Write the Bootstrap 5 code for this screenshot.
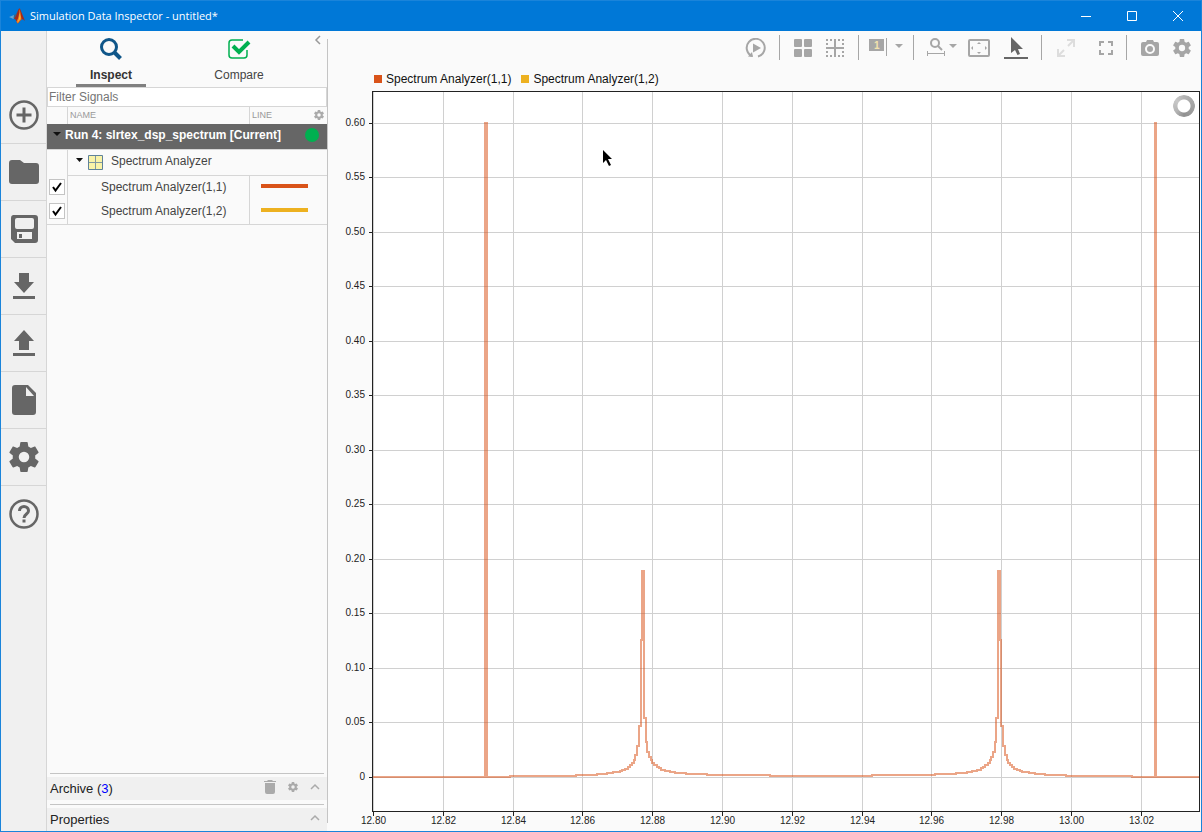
<!DOCTYPE html>
<html lang="en">
<head>
<meta charset="utf-8">
<meta name="viewport" content="width=device-width, initial-scale=1">
<title>Simulation Data Inspector - untitled*</title>
<link href="https://cdn.jsdelivr.net/npm/bootstrap@5.3.0/dist/css/bootstrap.min.css" rel="stylesheet">
<style>
  body { font-family: "Liberation Sans", Arial, sans-serif; font-size: 12px; line-height: 16px; color: #444; background: #fafafa; }
  button { color: inherit; }
  svg { display: block; flex: none; }
  .plain { border: 0; background: none; padding: 0; display: flex; align-items: center; justify-content: center; }
  .window { min-height: 100vh; border: 1px solid #1a84da; }
  .titlebar { height: 30px; background: #0078d7; color: #fff; padding-left: 8px; }
  .titlebar h1 { font: 11px/16px "Open Sans", sans-serif; margin: 0 0 0 5px; }
  .titlebar .plain { width: 46px; height: 30px; }
  .rail { width: 46px; background: #f0f0f0; border-right: 1px solid #d6d6d6; padding-top: 56px; color: #666; }
  .rail .plain { width: 45px; height: 57px; border-bottom: 1px solid #d6d6d6; }
  .rail .plain:last-child { border-bottom-color: transparent; }
  .side { width: 281px; }
  .side::after { content: ""; position: absolute; top: 8px; right: 0; bottom: 8px; width: 1px; background: #c4c4c4; }
  .tabs { height: 56px; margin-right: 1px; }
  .tabs .plain { width: 128px; flex-direction: column; padding-top: 5px; color: #444; }
  .tabs .plain span { width: 70px; margin-top: 6px; border-bottom: 3px solid transparent; padding-bottom: 1px; }
  .tabs .plain.active span { border-color: #808080; font-weight: bold; color: #333; }
  .collapse-btn { top: 3px; right: 5px; color: #999; }
  .filter { height: 19px; width: 280px; border: 1px solid #d6d6d6; border-bottom: 0; padding: 0 1px; background: #fff; font-size: 12px; line-height: 16px; }
  .filter::placeholder { color: #757575; opacity: 1; }
  .signals { width: 280px; table-layout: fixed; border-collapse: separate; border-spacing: 0; }
  .signals th, .signals td { padding: 0; vertical-align: middle; }
  .signals thead th { height: 18px; border-top: 1px solid #d6d6d6; font-weight: normal; font-size: 9px; line-height: 12px; color: #999; }
  .signals thead .edge { padding: 0 3px 2px 2px; }
  .signals tbody td { height: 24px; padding-bottom: 2px; }
  .edge { border-left: 1px solid #d6d6d6; }
  .signals .run td { height: 25px; padding-left: 6px; padding-bottom: 4px; background: #666; color: #fff; font-weight: bold; }
  .signals .group td { height: 27px; padding-bottom: 4px; border-bottom: 1px solid #d6d6d6; border-top: 1px solid #d6d6d6; }
  .signals .group td:first-child { border-bottom: 0; }
  .signals .last td { height: 25px; border-bottom: 1px solid #d6d6d6; }
  .signals label { padding-left: 33px; }
  .dot { width: 14px; height: 14px; border-radius: 50%; background: #00b050; margin-right: 8px; }
  .tick { appearance: none; display: block; width: 16px; height: 16px; margin: 0 0 0 2px; border: 1px solid #c4c4c4; background: #fff; }
  .tick:checked { background: #fff url("data:image/svg+xml,%3Csvg xmlns='http://www.w3.org/2000/svg' viewBox='0 0 14 14'%3E%3Cpath d='M3 7l2.500 3.500L11 3' fill='none' stroke='%23000' stroke-width='2'/%3E%3C/svg%3E"); }
  .swatch { width: 47px; height: 4px; margin: 0 0 3px 11px; }
  .orange { background: #d95319; }
  .yellow { background: #edb120; }
  .fold { font-size: 13px; line-height: 16px; margin-right: 1px; }
  .fold::before { content: ""; display: block; height: 1px; margin: 0 3px 3px; background: #c4c4c4; }
  .fold > div { height: 23px; padding: 0 7px 0 3px; background: #f0f0f0; color: #222; }
  .fold a { color: #00f; text-decoration: none; }
  .fold .plain { color: #aaa; padding-bottom: 3px; }
  .toolbar { height: 35px; padding: 0 3px 2px 0; color: #a6a6a6; }
  .toolbar .grp { display: flex; padding: 0 7px; }
  .toolbar .grp + .grp { border-left: 1px solid #a6a6a6; }
  .toolbar .plain { height: 25px; width: 32px; }
  .toolbar .wide { width: 42px; }
  .toolbar .mid { width: 40px; }
  .toolbar .faint { color: #ddd; }
  .legend-row { height: 25px; padding-left: 46px; color: #111; }
  .key { width: 8px; height: 8px; margin-right: 4px; }
  .legend-row .yellow { margin-left: 10px; }
  .axis text { font-size: 10px; fill: #222; }
  .spinner-ring { width: 22px; height: 22px; top: 4px; right: 6px; border-radius: 50%; background: conic-gradient(#b4b4b4, #a4a4a4 25%, #909090 50%, #b4b4b4 65%, #c8c8c8 85%, #b4b4b4); -webkit-mask: radial-gradient(circle, transparent 6px, #000 7px); mask: radial-gradient(circle, transparent 6px, #000 7px); }
  .pointer { left: 275px; top: 59px; }
</style>
</head>
<body>
<div class="window d-flex flex-column">
  <header class="titlebar d-flex align-items-center">
    <svg width="16" height="16" viewBox="0 0 16 16" aria-hidden="true"><path fill="#66a5d0" d="M0 9l5-2 2 1.500L4.500 11z"/><path fill="#33658c" d="M5 7c2 0 3-3 4-5L7.500 9.500 5.500 11 4.500 10.500z"/><path fill="#a32a1b" d="M5 10.500C7 9 8 5 9 2.500 10 0 11 0 11.500 2L16 13c-2-2-3-2-4-1-1 1-2 2.500-3.500 3.500L6.500 11.500z"/><path fill="#ee7d22" d="M10.500 1c0 4-1 9-3 12.500l1 2c2-1 2.500-3.500 4-4C12 8 11.500 4 10.500 1z"/><path fill="#f9c13a" d="M10.500 5c0 4-.5 7-2 9 1.500-1 2-2.500 3-3.500C11.500 8 11 7 10.500 5z"/></svg>
    <h1>Simulation Data Inspector - untitled*</h1>
    <div class="d-flex ms-auto">
      <button class="plain" aria-label="Minimize"><svg width="10" height="10"><path d="M0 5.500h10" stroke="#fff"/></svg></button>
      <button class="plain" aria-label="Maximize"><svg width="10" height="10"><path d="M.5.5h9v9h-9z" fill="none" stroke="#fff"/></svg></button>
      <button class="plain" aria-label="Close"><svg width="10" height="10"><path d="M0 0l10 10M10 0L0 10" stroke="#fff"/></svg></button>
    </div>
  </header>

  <div class="d-flex flex-grow-1">
    <nav class="rail flex-shrink-0" aria-label="Main">
      <button class="plain" aria-label="New"><svg width="30" height="30" fill="none" stroke="currentColor"><circle cx="15" cy="15" r="13.500" stroke-width="2.500"/><path d="M15 7.500v15M7.500 15h15" stroke-width="3"/></svg></button>
      <button class="plain" aria-label="Open"><svg width="30" height="24" fill="currentColor"><path d="M3 0h8l4 3h12a3 3 0 013 3v15a3 3 0 01-3 3H3a3 3 0 01-3-3V3a3 3 0 013-3z"/></svg></button>
      <button class="plain" aria-label="Save"><svg width="28" height="28" fill="currentColor"><path fill-rule="evenodd" d="M3 0h22a3 3 0 013 3v22a3 3 0 01-3 3H5l-4-4V3a3 3 0 012-3zM7 3a2 2 0 00-2 2v7a2 2 0 002 2h15a2 2 0 002-2V5a2 2 0 00-2-2zM7 17v7h15v-7zm2 2h3v4H9z"/></svg></button>
      <button class="plain" aria-label="Import"><svg width="22" height="26" fill="currentColor"><path d="M6 0h10v9h5L11 20 1 9h5zM0 23h22v3H0z"/></svg></button>
      <button class="plain" aria-label="Export"><svg width="22" height="26" fill="currentColor"><path d="M11 0l10 11h-5v9H6v-9H1zM0 23h22v3H0z"/></svg></button>
      <button class="plain" aria-label="Report"><svg width="24" height="30" fill="currentColor"><path fill-rule="evenodd" d="M3 0h13l8 8v19a3 3 0 01-3 3H3a3 3 0 01-3-3V3a3 3 0 013-3zM14 2v9h8z"/></svg></button>
      <button class="plain" aria-label="Preferences"><svg width="30" height="30" viewBox="2 2 20 20" fill="currentColor"><path id="gear" d="M19.430 12.980c.04-.32.07-.64.07-.98s-.03-.66-.07-.98l2.110-1.650c.19-.15.24-.42.12-.64l-2-3.460c-.12-.22-.39-.3-.61-.22l-2.490 1c-.52-.4-1.080-.73-1.690-.98l-.38-2.650A.488.488 0 0014 2h-4c-.25 0-.46.18-.49.42l-.38 2.650c-.61.25-1.170.59-1.690.98l-2.490-1c-.23-.09-.49 0-.61.22l-2 3.460c-.13.22-.07.49.12.64l2.110 1.650c-.04.32-.07.65-.07.98s.03.66.07.98l-2.110 1.650c-.19.15-.24.42-.12.64l2 3.460c.12.22.39.3.61.22l2.490-1c.52.4 1.080.73 1.690.98l.38 2.650c.03.24.24.42.49.42h4c.25 0 .46-.18.49-.42l.38-2.650c.61-.25 1.170-.59 1.690-.98l2.490 1c.23.09.49 0 .61-.22l2-3.460c.12-.22.07-.49-.12-.64zM12 15.500a3.500 3.500 0 110-7 3.500 3.500 0 010 7z"/></svg></button>
      <button class="plain" aria-label="Help"><svg width="30" height="30" fill="none" stroke="currentColor" stroke-width="3"><circle cx="15" cy="15" r="13.500" stroke-width="2.500"/><path d="M10.500 12c0-6 9-6 9 0 0 3-4.500 3-4.500 7M15 20.500v3"/></svg></button>
    </nav>

    <aside class="side position-relative flex-shrink-0 d-flex flex-column">
      <div class="tabs d-flex">
        <button class="plain active"><svg width="24" height="24" fill="none" stroke="#0f5689"><circle cx="10" cy="10" r="7.500" stroke-width="3"/><path d="M15.500 15.500l6 6" stroke-width="4"/></svg><span>Inspect</span></button>
        <button class="plain"><svg width="24" height="24" fill="none" stroke="#00b050"><path d="M16 3H5a3 3 0 00-3 3v12a3 3 0 003 3h12a3 3 0 003-3v-5" stroke-width="1.500"/><path d="M6 9l6 6L22 5" stroke-width="4"/></svg><span>Compare</span></button>
      </div>
      <button class="plain collapse-btn position-absolute" aria-label="Collapse panel"><svg width="10" height="12" fill="none" stroke="currentColor"><path d="M7 2L3 6l4 4" stroke-width="1.500"/></svg></button>
      <input class="filter" type="text" placeholder="Filter Signals" aria-label="Filter Signals">
      <table class="signals">
        <colgroup><col style="width:20px"><col style="width:182px"><col style="width:78px"></colgroup>
        <thead><tr>
          <th></th><th class="edge">NAME</th>
          <th class="edge"><div class="d-flex align-items-center justify-content-between">LINE <button class="plain" aria-label="Columns"><svg width="10" height="10" viewBox="2 2 20 20" fill="#aaa"><use href="#gear"/></svg></button></div></th>
        </tr></thead>
        <tbody>
          <tr class="run"><td colspan="3"><div class="d-flex align-items-center"><button class="plain me-1" aria-label="Fold run"><svg width="8" height="5"><path d="M0 0h8L4 4z" fill="#111"/></svg></button><span class="text-nowrap">Run 4: slrtex_dsp_spectrum [Current]</span><span class="dot ms-auto"></span></div></td></tr>
          <tr class="group"><td></td><td class="edge" colspan="2"><div class="d-flex align-items-center ps-2"><button class="plain" aria-label="Fold block"><svg width="8" height="5"><path d="M0 0h7L3.500 4z" fill="#111"/></svg></button><svg class="ms-1 mt-1" width="15" height="15"><path d="M.5.500h14v14H.5z" fill="#f9f3a8" stroke="#5f8299"/><path d="M7.500 1v13M1 7.500h13" stroke="#8199a0"/></svg><span class="ms-1 ps-1">Spectrum Analyzer</span></div></td></tr>
          <tr><td><input class="tick" type="checkbox" id="s1" checked></td><td class="edge text-nowrap"><label for="s1">Spectrum Analyzer(1,1)</label></td><td class="edge"><div class="swatch orange"></div></td></tr>
          <tr class="last"><td><input class="tick" type="checkbox" id="s2" checked></td><td class="edge text-nowrap"><label for="s2">Spectrum Analyzer(1,2)</label></td><td class="edge"><div class="swatch yellow"></div></td></tr>
        </tbody>
      </table>

      <section class="fold mt-auto mb-1 pb-0"><div class="d-flex align-items-center"><span>Archive (<a href="#">3</a>)</span>
        <span class="d-flex ms-auto align-items-center">
        <button class="plain me-2" aria-label="Delete"><svg width="12" height="14" fill="currentColor"><path d="M1 3h10v9a2 2 0 01-2 2H3a2 2 0 01-2-2zM0 1h3l1-1h4l1 1h3v1H0z"/></svg></button>
        <button class="plain ms-1 me-2" aria-label="Archive settings"><svg width="10" height="10" viewBox="2 2 20 20" fill="currentColor"><use href="#gear"/></svg></button>
        <button class="plain ms-1" aria-label="Expand archive"><svg width="10" height="8" fill="none" stroke="currentColor" stroke-width="1.500"><path d="M1 6l4-4 4 4"/></svg></button></span></div></section>
      <section class="fold"><div class="d-flex align-items-center"><span>Properties</span>
        <button class="plain ms-auto" aria-label="Expand properties"><svg width="10" height="8" fill="none" stroke="currentColor" stroke-width="1.500"><path d="M1 6l4-4 4 4"/></svg></button></div></section>
    </aside>

    <main class="flex-grow-1">
      <div class="toolbar d-flex justify-content-end align-items-center" role="toolbar" aria-label="Plot tools">
        <div class="grp"><button class="plain" aria-label="Replay"><svg width="22" height="20" fill="none" stroke="currentColor"><path d="M7 18A9 9 0 1113 18.500" stroke-width="2"/><path d="M3 18.500l5 .5-1-5z" fill="currentColor" stroke="none"/><path d="M8 5.500l8 4.500-8 4.500z" fill="currentColor" stroke="none"/></svg></button></div>
        <div class="grp">
          <button class="plain" aria-label="Layouts"><svg width="18" height="18" fill="currentColor"><rect width="8" height="8" rx="1"/><rect x="10" width="8" height="8" rx="1"/><rect y="10" width="8" height="8" rx="1"/><rect x="10" y="10" width="8" height="8" rx="1"/></svg></button>
          <button class="plain" aria-label="Subplots"><svg width="18" height="18" fill="none" stroke="currentColor" stroke-width="2"><path d="M9 0v18M0 9h18"/><path stroke-dasharray="2 2" d="M0 1h18M0 17h18M1 0v18M17 0v18"/></svg></button>
        </div>
        <div class="grp"><button class="plain mid gap-2" aria-label="Active plot"><svg width="18" height="20"><path fill="#a6a6a6" d="M0 1h15v12H0z"/><path stroke="#a6a6a6" d="M17.500 0v18"/><text x="5" y="11" font-size="10" font-weight="bold" fill="#f3e3ae">1</text></svg><svg class="mb-1" width="8" height="4"><path fill="currentColor" d="M0 0h8L4 4z"/></svg></button></div>
        <div class="grp pe-1">
          <button class="plain wide" aria-label="Zoom"><svg width="18" height="19" fill="none" stroke="currentColor"><circle cx="8" cy="5" r="4" stroke-width="2"/><path d="M11 8l4 4" stroke-width="2"/><path d="M.5 13v5M17.500 13v5M0 15.500h18"/></svg><svg class="ms-1 mb-1" width="8" height="4"><path fill="currentColor" d="M0 0h8L4 4z"/></svg></button>
          <button class="plain" aria-label="Fit to view"><svg width="22" height="18"><rect x="1" y="1" width="20" height="16" rx="1" fill="none" stroke="currentColor" stroke-width="2"/><path fill="currentColor" d="M11 3l2 2H9zM11 15l2-2H9zM3 9l2-2v4zM19 9l-2-2v4z"/></svg></button>
          <button class="plain wide" aria-label="Select" aria-pressed="true"><svg width="24" height="22" fill="#666"><path d="M7 0v16l4-3 2.500 5 2.500-1-2-5h5z"/><path d="M0 20h24v2H0z"/></svg></button>
        </div>
        <div class="grp px-0 ps-1">
          <button class="plain mid faint" aria-label="Expand plot" disabled><svg width="18" height="18" fill="none" stroke="currentColor" stroke-width="2"><path d="M10 1h7v7M17 1l-6 6M8 17H1v-7M1 17l6-6"/></svg></button>
          <button class="plain mid" aria-label="Full screen"><svg width="14" height="14" fill="none" stroke="currentColor" stroke-width="2"><path d="M1 5V1h4M9 1h4v4M13 9v4H9M5 13H1V9"/></svg></button>
        </div>
        <div class="grp pe-0">
          <button class="plain" aria-label="Snapshot"><svg width="18" height="16" fill="currentColor"><path fill-rule="evenodd" d="M6 0h6l1 2h3a2 2 0 012 2v10a2 2 0 01-2 2H2a2 2 0 01-2-2V4a2 2 0 012-2h3zM9 4a5 5 0 100 10A5 5 0 009 4z"/><circle cx="9" cy="9" r="3"/></svg></button>
          <button class="plain" aria-label="Settings"><svg width="18" height="18" viewBox="2 2 20 20" fill="currentColor"><use href="#gear"/></svg></button>
        </div>
      </div>

      <div class="legend-row d-flex align-items-center">
        <span class="key orange"></span><span>Spectrum Analyzer(1,1)</span>
        <span class="key yellow"></span><span>Spectrum Analyzer(1,2)</span>
      </div>
      <div class="position-relative">
        <svg class="w-100" viewBox="-45 0 873 740" role="img" aria-label="Spectrum plot">
          <rect x="-.5" y=".5" width="827" height="720" fill="#fff"/>
          <g id="grid" class="axis" shape-rendering="crispEdges"></g>
          <rect x="-.5" y=".5" width="827" height="720" fill="none" stroke="#222"/>
          <path id="trace" fill="none" stroke="#d95319" stroke-opacity=".52" stroke-width="2"/>
        </svg>
        <span class="spinner-ring position-absolute"></span>
        <svg class="pointer position-absolute" width="10" height="18"><path d="M0 0v13l3-3 3 6 2-1-3-6h4z"/></svg>
      </div>
    </main>
  </div>
</div>
<script>
  // Grid lines and axis labels; x = 0 is 12.80 and y = 686 is level 0.
  let marks = "";
  for (let i = 0; i < 12; i++) {
    const x = Math.round(i * 69.8) + 0.5;
    marks += `<path d="M${x} 1V720" stroke="#d0d0d0"/><path d="M${x} 721v4" stroke="#222"/>` +
             `<text x="${x}" y="733" text-anchor="middle">${(12.8 + i * 0.02).toFixed(2)}</text>`;
  }
  for (let i = 0; i < 13; i++) {
    const y = Math.floor(686 - i * 54.5) + 0.5;
    marks += `<path d="M0 ${y}H826" stroke="#d0d0d0"/><path d="M-4 ${y}h4" stroke="#222"/>` +
             `<text x="-8" y="${y + 2.5}" text-anchor="end">${i ? (i * 0.05).toFixed(2) : 0}</text>`;
  }
  document.getElementById("grid").innerHTML = marks;

  // Stepped spectrum: [x where a level starts, level]; the upper band mirrors the lower one.
  const steps = [[0,686],[112,32],[114,686],[137,685],[203,684],[224,683],[234,682],[240,681],[247,680],
    [249,679],[252,678],[255,676],[257,674],[259,672],[261,669],[262,664],[264,655],[266,635],[268,549],
    [269,480],[271,627],[273,651],[274,661],[276,666],[278,669],[279,672],[281,674],[284,676],[286,677],
    [288,679],[292,680],[297,681],[302,682],[313,683],[334,684],[397,685]];
  let path = "M0 686", back = "";
  for (const [x, y] of steps.slice(1)) path += `H${x}V${y}`;
  for (let i = steps.length - 1; i > 2; i--) back += `H${896 - steps[i][0]}V${steps[i - 1][1]}`;
  document.getElementById("trace").setAttribute("d", path + back + "H782V32H783V686H826");
</script>
<script src="https://cdn.jsdelivr.net/npm/bootstrap@5.3.0/dist/js/bootstrap.bundle.min.js"></script>
</body>
</html>
